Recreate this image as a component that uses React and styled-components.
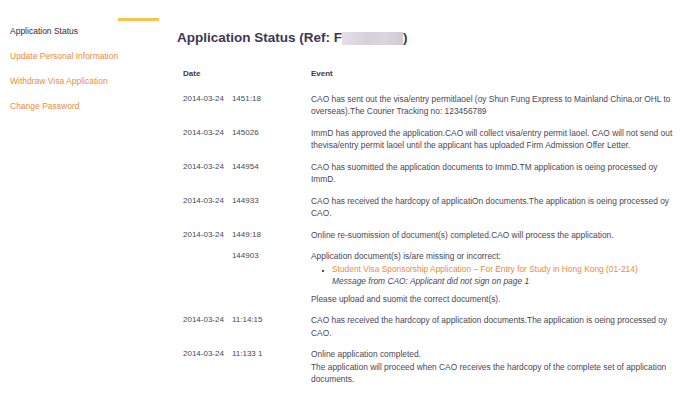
import React from 'react'
import styled, { createGlobalStyle } from 'styled-components'

const GlobalStyle = createGlobalStyle`
  body {
    margin: 0;
    background: #ffffff;
    font-family: "Liberation Sans", Arial, sans-serif;
    color: #4b4658;
  }
`

const NAV = [
  { label: 'Application Status', active: true },
  { label: 'Update Personal Information' },
  { label: 'Withdraw Visa Application' },
  { label: 'Change Password' },
]

const EVENTS = [
  {
    date: '2014-03-24',
    time: '1451:18',
    text: ['CAO has sent out the visa/entry permitlaoel (oy Shun Fung Express to Mainland China,or OHL to overseas).The Courier Tracking no: 123456789'],
  },
  {
    date: '2014-03-24',
    time: '145026',
    text: ['ImmD has approved the application.CAO will collect visa/entry permit laoel. CAO will not send out thevisa/entry permit laoel until the applicant has uploaded Firm Admission Offer Letter.'],
  },
  {
    date: '2014-03-24',
    time: '144954',
    text: ['CAO has suomitted the application documents to ImmD.TM application is oeing processed oy ImmD.'],
  },
  {
    date: '2014-03-24',
    time: '144933',
    text: ['CAO has received the hardcopy of applicatiOn documents.The application is oeing processed oy CAO.'],
  },
  {
    date: '2014-03-24',
    time: '1449:18',
    text: ['Online re-suomission of document(s) completed.CAO will process the application.'],
  },
  {
    date: '2014-03-24',
    time: '144903',
    hideDate: true,
    missing: {
      intro: 'Application document(s) is/are missing or incorrect:',
      doc: 'Student Visa Sponsorship Application – For Entry for Study in Hong Kong (01-214)',
      note: 'Message from CAO: Applicant did not sign on page 1',
      outro: 'Please upload and suomit the correct document(s).',
    },
  },
  {
    date: '2014-03-24',
    time: '11:14:15',
    text: ['CAO has received the hardcopy of application documents.The application is oeing processed oy CAO.'],
  },
  {
    date: '2014-03-24',
    time: '11:133 1',
    text: [
      'Online application completed.',
      'The application will proceed when CAO receives the hardcopy of the complete set of application documents.',
    ],
  },
]

const App = () => (
  <>
    <GlobalStyle />
    <Page>
      <Sidebar>
        <Accent />
        <Nav>
          {NAV.map(({ label, active }) => (
            <NavItem key={label} $active={active}>
              {label}
            </NavItem>
          ))}
        </Nav>
      </Sidebar>
      <Main>
        <Title>
          Application Status (Ref: F<Redacted />)
        </Title>
        <Table>
          <HeadRow>
            <HeadCell>Date</HeadCell>
            <HeadCell>Event</HeadCell>
          </HeadRow>
          {EVENTS.map((ev, i) => (
            <Row key={i}>
              <DateCell>
                <DatePart $hidden={ev.hideDate}>{ev.date}</DatePart>
                <TimePart>{ev.time}</TimePart>
              </DateCell>
              <EventCell>
                {ev.text &&
                  ev.text.map((line) => <Line key={line}>{line}</Line>)}
                {ev.missing && (
                  <>
                    <Line>{ev.missing.intro}</Line>
                    <DocList>
                      <li>
                        <DocLink>{ev.missing.doc}</DocLink>
                        <Note>{ev.missing.note}</Note>
                      </li>
                    </DocList>
                    <Line $gap>{ev.missing.outro}</Line>
                  </>
                )}
              </EventCell>
            </Row>
          ))}
        </Table>
      </Main>
    </Page>
  </>
)

const Page = styled.div`
  display: flex;
  min-height: 397px;
`

const Sidebar = styled.aside`
  width: 160px;
  flex-shrink: 0;
  display: flex;
  flex-direction: column;
  padding-top: 18px;
`

const Accent = styled.div`
  align-self: flex-end;
  width: 41px;
  height: 3px;
  margin-right: 1px;
  background: #f9c24c;
`

const Nav = styled.nav`
  display: flex;
  flex-direction: column;
  gap: 13px;
  margin-top: 4px;
  padding-left: 10px;
`

const NavItem = styled.a`
  font-size: 8.5px;
  line-height: 12px;
  color: ${(p) => (p.$active ? '#2f2b3b' : '#ee8b3c')};
  text-decoration: none;
  cursor: pointer;
`

const Main = styled.main`
  flex: 1;
  padding: 30px 0 0 17px;
`

const Title = styled.h1`
  margin: 0;
  font-size: 13.5px;
  line-height: 16px;
  font-weight: bold;
  color: #3e374f;
  display: flex;
  align-items: center;
`

const Redacted = styled.span`
  display: inline-block;
  width: 61px;
  height: 13px;
  background: linear-gradient(90deg, #e4e2e7 0%, #d4d1d9 40%, #d9d6dd 70%, #cfccd4 100%);
`

const Table = styled.div`
  margin: 22px 0 0 6px;
  font-size: 8px;
  line-height: 12.5px;
`

const HeadRow = styled.div`
  display: grid;
  grid-template-columns: 128px 372px;
  margin-bottom: 7px;
`

const HeadCell = styled.div`
  font-weight: bold;
  color: #3e374f;
`

const Row = styled.div`
  display: grid;
  grid-template-columns: 128px 372px;
  padding: 5px 0 4px;
`

const DateCell = styled.div`
  white-space: nowrap;
`

const DatePart = styled.span`
  visibility: ${(p) => (p.$hidden ? 'hidden' : 'visible')};
`

const TimePart = styled.span`
  margin-left: 8px;
`

const EventCell = styled.div`
  font-size: 8.4px;
`

const Line = styled.div`
  margin-top: ${(p) => (p.$gap ? '5px' : '0')};
`

const DocList = styled.ul`
  margin: 0;
  padding-left: 21px;
  list-style: square;

  li::marker {
    color: #4b4658;
    font-size: 6px;
  }
`

const DocLink = styled.a`
  display: block;
  color: #ef8a3b;
  text-decoration: none;
  cursor: pointer;
`

const Note = styled.em`
  display: block;
`

export default App
